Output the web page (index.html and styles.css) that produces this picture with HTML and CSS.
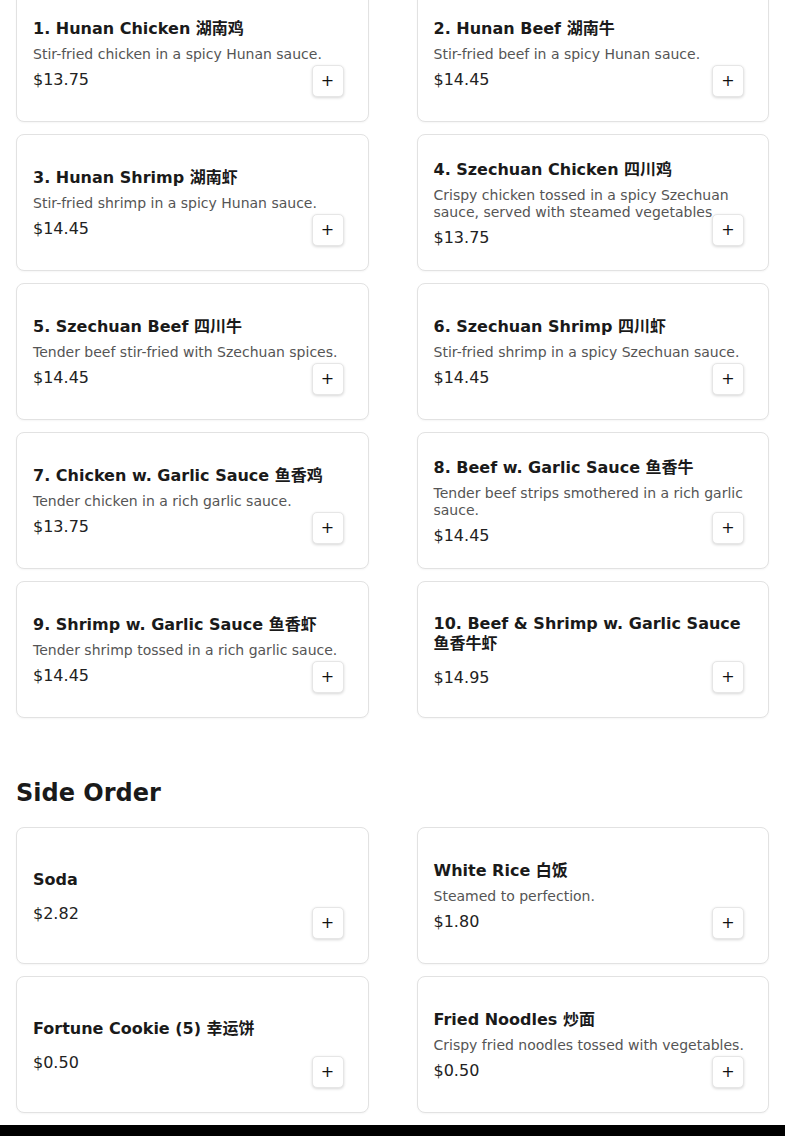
FILE: index.html
```html
<!DOCTYPE html>
<html lang="en">
<head>
<meta charset="utf-8">
<title>Menu</title>
<link rel="stylesheet" href="styles.css">
</head>
<body>
<main class="page">
  <section class="menu-section first">
    <div class="grid">
      <div class="card"><div class="info"><h3 class="name">1. Hunan Chicken 湖南鸡</h3><p class="desc">Stir-fried chicken in a spicy Hunan sauce.</p><p class="price">$13.75</p></div><button class="add" type="button">+</button></div>
      <div class="card"><div class="info"><h3 class="name">2. Hunan Beef 湖南牛</h3><p class="desc">Stir-fried beef in a spicy Hunan sauce.</p><p class="price">$14.45</p></div><button class="add" type="button">+</button></div>
      <div class="card"><div class="info"><h3 class="name">3. Hunan Shrimp 湖南虾</h3><p class="desc">Stir-fried shrimp in a spicy Hunan sauce.</p><p class="price">$14.45</p></div><button class="add" type="button">+</button></div>
      <div class="card"><div class="info"><h3 class="name">4. Szechuan Chicken 四川鸡</h3><p class="desc">Crispy chicken tossed in a spicy Szechuan sauce, served with steamed vegetables</p><p class="price">$13.75</p></div><button class="add" type="button">+</button></div>
      <div class="card"><div class="info"><h3 class="name">5. Szechuan Beef 四川牛</h3><p class="desc">Tender beef stir-fried with Szechuan spices.</p><p class="price">$14.45</p></div><button class="add" type="button">+</button></div>
      <div class="card"><div class="info"><h3 class="name">6. Szechuan Shrimp 四川虾</h3><p class="desc">Stir-fried shrimp in a spicy Szechuan sauce.</p><p class="price">$14.45</p></div><button class="add" type="button">+</button></div>
      <div class="card"><div class="info"><h3 class="name">7. Chicken w. Garlic Sauce 鱼香鸡</h3><p class="desc">Tender chicken in a rich garlic sauce.</p><p class="price">$13.75</p></div><button class="add" type="button">+</button></div>
      <div class="card"><div class="info"><h3 class="name">8. Beef w. Garlic Sauce 鱼香牛</h3><p class="desc">Tender beef strips smothered in a rich garlic sauce.</p><p class="price">$14.45</p></div><button class="add" type="button">+</button></div>
      <div class="card"><div class="info"><h3 class="name">9. Shrimp w. Garlic Sauce 鱼香虾</h3><p class="desc">Tender shrimp tossed in a rich garlic sauce.</p><p class="price">$14.45</p></div><button class="add" type="button">+</button></div>
      <div class="card"><div class="info"><h3 class="name">10. Beef &amp; Shrimp w. Garlic Sauce 鱼香牛虾</h3><p class="desc"></p><p class="price">$14.95</p></div><button class="add" type="button">+</button></div>
    </div>
  </section>
  <section class="menu-section">
    <h2 class="section-title">Side Order</h2>
    <div class="grid">
      <div class="card"><div class="info"><h3 class="name">Soda</h3><p class="desc"></p><p class="price">$2.82</p></div><button class="add" type="button">+</button></div>
      <div class="card"><div class="info"><h3 class="name">White Rice 白饭</h3><p class="desc">Steamed to perfection.</p><p class="price">$1.80</p></div><button class="add" type="button">+</button></div>
      <div class="card"><div class="info"><h3 class="name">Fortune Cookie (5) 幸运饼</h3><p class="desc"></p><p class="price">$0.50</p></div><button class="add" type="button">+</button></div>
      <div class="card"><div class="info"><h3 class="name">Fried Noodles 炒面</h3><p class="desc">Crispy fried noodles tossed with vegetables.</p><p class="price">$0.50</p></div><button class="add" type="button">+</button></div>
    </div>
  </section>
</main>
<footer class="footer"></footer>
</body>
</html>
```
FILE: styles.css
```css
* { box-sizing: border-box; }
html, body { margin: 0; padding: 0; background: #fff; }
body {
  font-family: "DejaVu Sans", "Noto Sans CJK SC", sans-serif;
  color: #1a1a1a;
}
.page { padding: 0 16px; }
.menu-section.first { margin-top: -15px; }
.section-title {
  font-size: 24px;
  line-height: 30px;
  font-weight: bold;
  margin: 60px 0 19px;
  color: #1a1a1a;
}
.grid {
  display: grid;
  grid-template-columns: 1fr 1fr;
  column-gap: 48px;
  row-gap: 12px;
}
.card {
  position: relative;
  min-height: 137px;
  border: 1px solid #e2e2e2;
  border-radius: 8px;
  padding: 17px 16px 15px;
  background: #fff;
  box-shadow: 0 1px 2px rgba(0,0,0,0.04);
  display: flex;
  flex-direction: column;
  justify-content: center;
}
.info { display: flex; flex-direction: column; }
.name {
  margin: 0 0 7px;
  font-size: 16px;
  line-height: 20px;
  font-weight: bold;
  color: #1a1a1a;
}
.desc {
  margin: 0;
  font-size: 14px;
  line-height: 17px;
  color: #555;
}
.price {
  margin: 7px 0 0;
  font-size: 16px;
  line-height: 20px;
  color: #222;
}
.add {
  position: absolute;
  right: 24px;
  bottom: 24px;
  width: 32px;
  height: 32px;
  padding: 0;
  border: 1px solid #e6e6e6;
  border-radius: 5px;
  background: #fff;
  box-shadow: 0 1px 3px rgba(0,0,0,0.16);
  font-family: "DejaVu Sans", sans-serif;
  font-size: 16px;
  line-height: 30px;
  color: #111;
  cursor: pointer;
}
.footer {
  margin-top: 12px;
  height: 60px;
  background: #000;
}
```
